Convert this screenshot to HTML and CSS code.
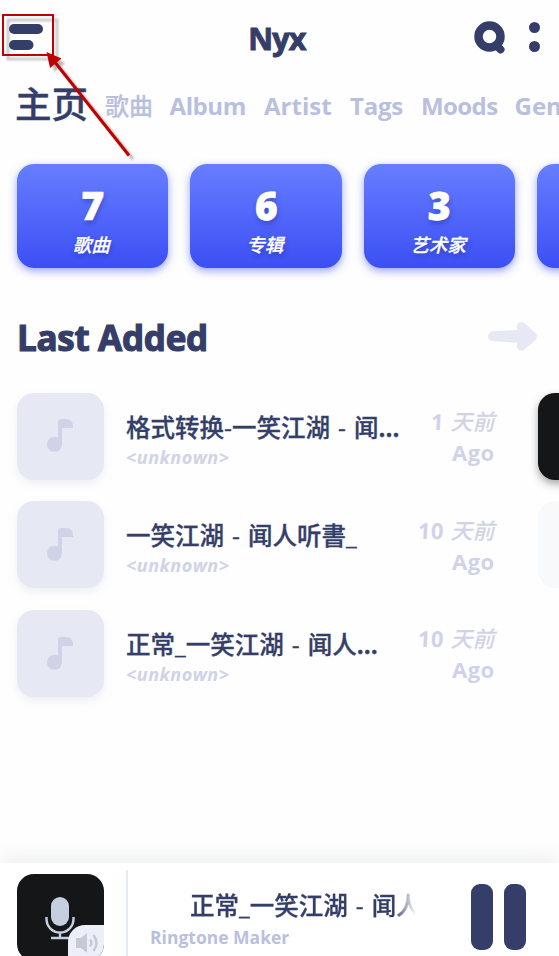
FILE: index.html
```html
<!DOCTYPE html>
<html lang="zh-CN">
<head>
<meta charset="utf-8">
<title>Nyx</title>
<link rel="stylesheet" href="styles.css">
</head>
<body>
<svg class="defs" width="0" height="0">
  <symbol id="note" viewBox="0 0 26 33"><path d="M11 3q0-3 3-3h5q7 0 7 8v1H15v16.500A7.500 7.500 0 1 1 11 18.700z"/></symbol>
</svg>
<div class="app">
  <header class="topbar">
    <svg class="menu" width="34" height="26" viewBox="0 0 34 26"><rect width="34" height="10" rx="5"/><rect y="16" width="24.500" height="10" rx="5"/></svg>
    <h1 class="brand">Nyx</h1>
    <svg class="search" width="32" height="34" viewBox="0 0 32 34"><circle cx="15.500" cy="15.500" r="11" fill="none" stroke="#343e68" stroke-width="8.500"/><path d="M22 24l4.500 4.500" stroke="#343e68" stroke-width="8" stroke-linecap="round"/></svg>
    <svg class="more" width="11" height="30" viewBox="0 0 11 30"><circle cx="5.500" cy="5.500" r="5.500"/><circle cx="5.500" cy="24.500" r="5.500"/></svg>
  </header>
  <nav class="tabs">
    <span class="tab current">主页</span><span class="tab songs">歌曲</span><span class="tab album">Album</span><span class="tab artist">Artist</span><span class="tab tags">Tags</span><span class="tab moods">Moods</span><span class="tab">Gen</span>
  </nav>
  <section class="stats">
    <div class="stat"><b>7</b><span>歌曲</span></div>
    <div class="stat"><b>6</b><span>专辑</span></div>
    <div class="stat"><b>3</b><span>艺术家</span></div>
    <div class="stat"></div>
  </section>
  <div class="section-head">
    <h2>Last Added</h2>
    <svg width="50" height="29" viewBox="0 0 50 29"><path d="M5 9.300L29 8V4.500Q29 0 33.500 0q2 0 3.500 1.500l10.500 9.500q3 3.500 0 7L37 27q-1.500 1.500-3.500 1.500-4.500 0-4.500-4.500v-3.300L5 19.300Q0 18.500 0 14.300T5 9.300z"/></svg>
  </div>
  <main class="pages">
    <div class="list">
      <div class="row"><div class="cover"><svg width="26" height="33"><use href="#note"/></svg></div><div class="info"><div class="name">格式转换-一笑江湖 - 闻<b>...</b></div><div class="by">&lt;unknown&gt;</div></div><div class="when"><div><b>1</b> <i>天前</i></div><div>Ago</div></div></div>
      <div class="row"><div class="cover"><svg width="26" height="33"><use href="#note"/></svg></div><div class="info"><div class="name">一笑江湖 - 闻人听書_</div><div class="by">&lt;unknown&gt;</div></div><div class="when"><div><b>10</b> <i>天前</i></div><div>Ago</div></div></div>
      <div class="row"><div class="cover"><svg width="26" height="33"><use href="#note"/></svg></div><div class="info"><div class="name">正常_一笑江湖 - 闻人<b>...</b></div><div class="by">&lt;unknown&gt;</div></div><div class="when"><div><b>10</b> <i>天前</i></div><div>Ago</div></div></div>
    </div>
    <div class="next"><div class="cover dark"></div><div class="cover pale"></div></div>
  </main>
  <footer class="player">
    <div class="art">
      <svg class="mic" width="30" height="43" viewBox="0 0 30 43"><rect x="6" width="18" height="29" rx="9" fill="#c5cfdd"/><path d="M1.500 20v2a13.500 13.500 0 0 0 27 0v-2M15 35.500V40M6 41h18" fill="none" stroke="#c5cfdd" stroke-width="2.400"/></svg>
      <div class="volume"><svg width="24" height="20" viewBox="0 0 24 20"><path d="M0 5h5l6-5v20l-6-5H0z" fill="#c3cad4"/><path d="M14 6.500q3 3.500 0 7M17.500 2q6 8 0 16" fill="none" stroke="#c3cad4" stroke-width="2.500"/></svg></div>
    </div>
    <div class="divider"></div>
    <div class="playing"><div class="name">正常_一笑江湖 - 闻人</div><div class="source">Ringtone Maker</div></div>
    <div class="pause"><i></i><i></i></div>
  </footer>
  <svg class="callout" width="180" height="170" viewBox="0 0 180 170">
    <defs><filter id="soft" x="-20%" y="-20%" width="140%" height="140%"><feGaussianBlur stdDeviation="1.300"/></filter></defs>
    <g filter="url(#soft)" opacity=".35" transform="translate(4 4)"><rect x="4" y="16" width="49" height="39" fill="none" stroke="#555" stroke-width="2.500"/><path d="M129 155L55 62" stroke="#333" stroke-width="3"/><path d="M47 52l14 7-11 9z" fill="#333"/></g>
    <rect x="3" y="15" width="50" height="40" fill="none" stroke="#c00000" stroke-width="2"/>
    <path d="M129 155.500L54 61" stroke="#c00000" stroke-width="3"/><path d="M46.500 52l15 6.500L50 68z" fill="#c00000"/>
  </svg>
</div>
</body>
</html>
```
FILE: styles.css
```css
* { box-sizing: border-box; }
body {
  margin: 0;
  background: #fefefe;
  color: #343e68;
  font-family: "Open Sans", "Noto Sans CJK SC", sans-serif;
}
svg { display: block; flex: none; }
h1, h2 { margin: 0; }
.defs { position: absolute; }
.app {
  position: relative;
  width: 559px;
  height: 956px;
  overflow: hidden;
  display: flex;
  flex-direction: column;
}
.topbar {
  height: 78px;
  flex: none;
  display: flex;
  align-items: flex-start;
  padding: 21px 19px 0 9px;
  fill: #343e68;
}
.menu { margin-top: 3px; }
.brand {
  flex: 1;
  padding-left: 37px;
  height: 36px;
  font-size: 30.500px;
  line-height: 35px;
  font-weight: 700;
  letter-spacing: -.8px;
  text-align: center;
  -webkit-text-stroke: 1px;
}
.more { margin: 1px 0 0 23px; }
.tabs {
  height: 54px;
  flex: none;
  display: flex;
  padding-left: 15px;
  white-space: nowrap;
  font-size: 24px;
  font-weight: 700;
  color: #b9bfdf;
  line-height: 56px;
}
.tab { flex: none; }
.current { width: 90px; font-size: 36.500px; font-weight: 500; line-height: 52px; color: #343e68; -webkit-text-stroke: .4px; }
.songs { width: 64.500px; font-weight: 500; -webkit-text-stroke: .2px; }
.album { width: 94.500px; letter-spacing: -.4px; }
.artist { width: 86px; }
.tags { width: 71px; letter-spacing: -.2px; }
.moods { width: 93.500px; letter-spacing: -.6px; }
.stats {
  display: flex;
  flex: none;
  gap: 22.200px;
  padding: 32px 0 0 17px;
}
.stat {
  width: 151.300px;
  height: 103.500px;
  flex: none;
  border-radius: 17px;
  background: linear-gradient(#667eff, #3c4ff5);
  box-shadow: 0 3px 9px rgba(70, 85, 250, .55);
  color: #fff;
  display: flex;
  flex-direction: column;
  align-items: center;
  padding: 18px 3px 0 0;
  text-shadow: 1px 3px 5px rgba(30, 40, 120, .4);
}
.stat b { font-size: 39px; line-height: 46px; font-weight: 800; margin-left: 3px; transform: skewX(-2deg); -webkit-text-stroke: .6px; }
.stat span { font-size: 18.500px; line-height: 33px; font-weight: 500; font-style: italic; -webkit-text-stroke: .3px; }
.section-head {
  display: flex;
  flex: none;
  justify-content: space-between;
  height: 125px;
  padding: 54.500px 21px 0 17px;
}
.section-head h2 { font-size: 35px; line-height: 32px; font-weight: 700; letter-spacing: -.3px; white-space: nowrap; -webkit-text-stroke: 1.200px; }
.section-head svg { fill: #e6e9f3; }
.pages { display: flex; flex: none; height: 470.500px; padding-left: 17px; }
.list, .next { display: flex; flex: none; flex-direction: column; gap: 21.800px; }
.list { width: 521px; }
.row { display: flex; height: 87px; }
.cover {
  width: 87px;
  height: 87px;
  flex: none;
  border-radius: 17px;
  background: #e6e9f3;
  display: flex;
  padding: 26.500px 0 0 30px;
  fill: #d0d3e8;
  box-shadow: 0 4px 8px rgba(200, 205, 225, .3);
}
.dark { background: #141618; box-shadow: 0 4px 8px rgba(0, 0, 0, .35); }
.pale { background: #f8f9fb; box-shadow: none; }
.info { width: 280px; margin-left: 22px; padding-top: 16px; white-space: nowrap; }
.name { font-size: 24.500px; line-height: 37px; font-weight: 500; word-spacing: 1.700px; -webkit-text-stroke: .3px; }
.by { font-size: 18px; line-height: 23px; font-style: italic; font-weight: 700; letter-spacing: .5px; color: #d0d3e8; }
.when {
  flex: 1;
  margin-right: 43.500px;
  padding-top: 13.400px;
  text-align: right;
  white-space: nowrap;
  color: #d0d3e8;
  font-size: 22px;
  font-weight: 700;
  line-height: 31px;
  margin-left: -40px;
}
.when div { height: 31px; letter-spacing: .4px; }
.when b { display: inline-block; font-weight: 700; transform: skewX(-3deg); }
.when i { font-weight: 500; letter-spacing: 0; }
.player {
  height: 93.500px;
  flex: none;
  display: flex;
  padding: 11px 0 0 17px;
  background: #fff;
  box-shadow: 0 -3px 22px rgba(60, 70, 110, .1);
}
.art {
  width: 87px;
  height: 87px;
  flex: none;
  border-radius: 17px;
  background: #141618;
  position: relative;
  overflow: hidden;
  padding: 23px 0 0 28px;
}
.volume {
  position: absolute;
  right: 0;
  bottom: 0;
  width: 36px;
  height: 36px;
  border-top-left-radius: 17px;
  background: #eceef8;
  padding: 8px 0 0 8px;
}
.divider { width: 2px; height: 90px; margin: -4px 22px 0 22px; background: #e6e9f6; flex: none; }
.playing { width: 266px; flex: none; white-space: nowrap; padding-top: 12.500px; overflow: hidden; }
.playing .name {
  margin-left: 40px;
  overflow: hidden;
  -webkit-mask-image: linear-gradient(90deg, #000 90%, transparent);
  mask-image: linear-gradient(90deg, #000 90%, transparent);
}
.source { font-size: 17.500px; line-height: 26px; font-weight: 700; color: #b9bfdf; }
.pause { display: flex; gap: 10.500px; padding: 10px 0 0 55px; }
.pause i { width: 22px; height: 66px; border-radius: 9px; background: #343e68; }
.callout { position: absolute; left: 0; top: 0; }
```
